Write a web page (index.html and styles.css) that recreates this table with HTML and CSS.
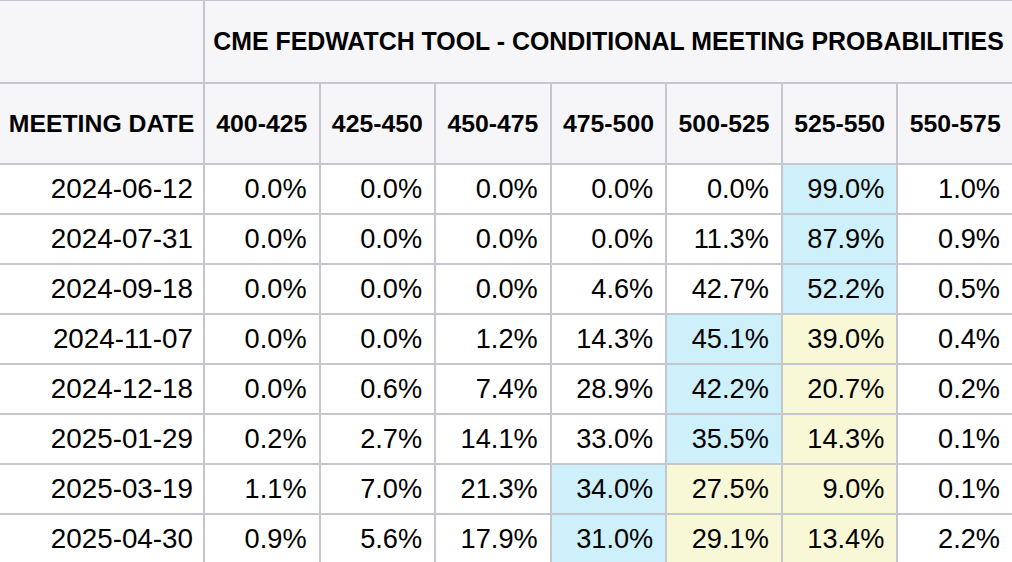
FILE: index.html
```html
<!DOCTYPE html>
<html lang="en">
<head>
<meta charset="utf-8">
<title>CME FedWatch Tool</title>
<link rel="stylesheet" href="styles.css">
</head>
<body>
<div class="grid">
  <div class="cell head"></div>
  <div class="cell head title">CME FEDWATCH TOOL - CONDITIONAL MEETING PROBABILITIES</div>

  <div class="cell head col">MEETING DATE</div>
  <div class="cell head col">400-425</div>
  <div class="cell head col">425-450</div>
  <div class="cell head col">450-475</div>
  <div class="cell head col">475-500</div>
  <div class="cell head col">500-525</div>
  <div class="cell head col">525-550</div>
  <div class="cell head col">550-575</div>

  <div class="cell date">2024-06-12</div>
  <div class="cell num">0.0%</div><div class="cell num">0.0%</div><div class="cell num">0.0%</div><div class="cell num">0.0%</div><div class="cell num">0.0%</div><div class="cell num blue">99.0%</div><div class="cell num">1.0%</div>

  <div class="cell date">2024-07-31</div>
  <div class="cell num">0.0%</div><div class="cell num">0.0%</div><div class="cell num">0.0%</div><div class="cell num">0.0%</div><div class="cell num">11.3%</div><div class="cell num blue">87.9%</div><div class="cell num">0.9%</div>

  <div class="cell date">2024-09-18</div>
  <div class="cell num">0.0%</div><div class="cell num">0.0%</div><div class="cell num">0.0%</div><div class="cell num">4.6%</div><div class="cell num">42.7%</div><div class="cell num blue">52.2%</div><div class="cell num">0.5%</div>

  <div class="cell date">2024-11-07</div>
  <div class="cell num">0.0%</div><div class="cell num">0.0%</div><div class="cell num">1.2%</div><div class="cell num">14.3%</div><div class="cell num blue">45.1%</div><div class="cell num yellow">39.0%</div><div class="cell num">0.4%</div>

  <div class="cell date">2024-12-18</div>
  <div class="cell num">0.0%</div><div class="cell num">0.6%</div><div class="cell num">7.4%</div><div class="cell num">28.9%</div><div class="cell num blue">42.2%</div><div class="cell num yellow">20.7%</div><div class="cell num">0.2%</div>

  <div class="cell date">2025-01-29</div>
  <div class="cell num">0.2%</div><div class="cell num">2.7%</div><div class="cell num">14.1%</div><div class="cell num">33.0%</div><div class="cell num blue">35.5%</div><div class="cell num yellow">14.3%</div><div class="cell num">0.1%</div>

  <div class="cell date">2025-03-19</div>
  <div class="cell num">1.1%</div><div class="cell num">7.0%</div><div class="cell num">21.3%</div><div class="cell num blue">34.0%</div><div class="cell num yellow">27.5%</div><div class="cell num yellow">9.0%</div><div class="cell num">0.1%</div>

  <div class="cell date">2025-04-30</div>
  <div class="cell num">0.9%</div><div class="cell num">5.6%</div><div class="cell num">17.9%</div><div class="cell num blue">31.0%</div><div class="cell num yellow">29.1%</div><div class="cell num yellow">13.4%</div><div class="cell num">2.2%</div>
</div>
</body>
</html>
```
FILE: styles.css
```css
html, body {
  margin: 0;
  padding: 0;
  background: #ffffff;
  overflow: hidden;
}

.grid {
  width: 1012px;
  display: grid;
  grid-template-columns: 203px repeat(7, 1fr);
  grid-template-rows: 81px 79px repeat(8, 48px);
  gap: 2px;
  padding-top: 1px;
  background: #c6c6ce;
  font-family: "Liberation Sans", Arial, Helvetica, sans-serif;
  color: #000;
}

.cell {
  background: #ffffff;
  display: flex;
  align-items: center;
  white-space: nowrap;
}

.head {
  background: #f6f6f8;
  font-weight: bold;
  font-size: 24.8px;
  justify-content: center;
}

.title {
  grid-column: span 7;
  font-size: 24.9px;
}

.date {
  justify-content: flex-end;
  padding-right: 10px;
  font-size: 27.8px;
}

.num {
  justify-content: flex-end;
  padding-right: 12px;
  font-size: 27.2px;
}

.blue {
  background: #cdf0fb;
}

.yellow {
  background: #f8f8d7;
}
```
